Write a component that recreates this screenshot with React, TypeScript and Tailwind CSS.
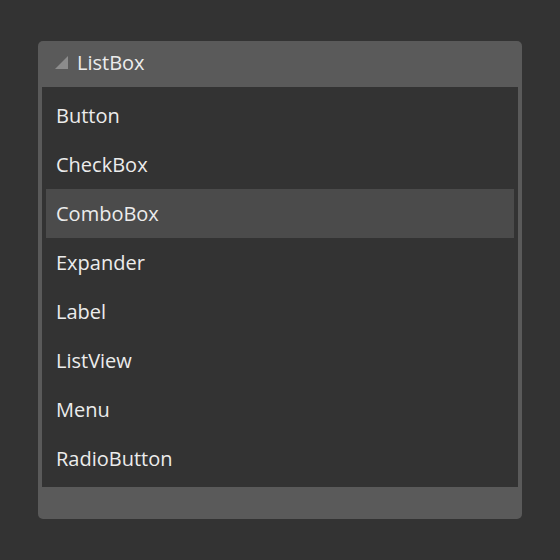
const items = ['Button', 'CheckBox', 'ComboBox', 'Expander', 'Label', 'ListView', 'Menu', 'RadioButton']

export default function App() {
  return (
    <div
      className="flex h-[560px] w-[560px] bg-[#333333] pl-[38px] pt-[41px]"
      style={{ fontFamily: '"Open Sans", "Noto Sans", sans-serif' }}
    >
      <div className="flex h-[478px] w-[484px] flex-col rounded-[5px] bg-[#5a5a5a]">
        <div className="flex h-[46px] items-center gap-[9px] pb-[3px] pl-[17px] text-[20px] text-[#ececec]">
          <svg width="13" height="13" viewBox="0 0 13 13">
            <polygon points="13,0 13,13 0,13" fill="#8c8c8c" />
          </svg>
          <span>ListBox</span>
        </div>
        <div className="mx-[4px] flex h-[400px] flex-col bg-[#333333] p-[4px]">
          {items.map((item) => (
            <div
              key={item}
              className={`flex h-[49px] items-center pl-[10px] text-[20px] text-[#ececec] ${
                item === 'ComboBox' ? 'bg-[#4b4b4b]' : ''
              }`}
            >
              {item}
            </div>
          ))}
        </div>
      </div>
    </div>
  )
}
